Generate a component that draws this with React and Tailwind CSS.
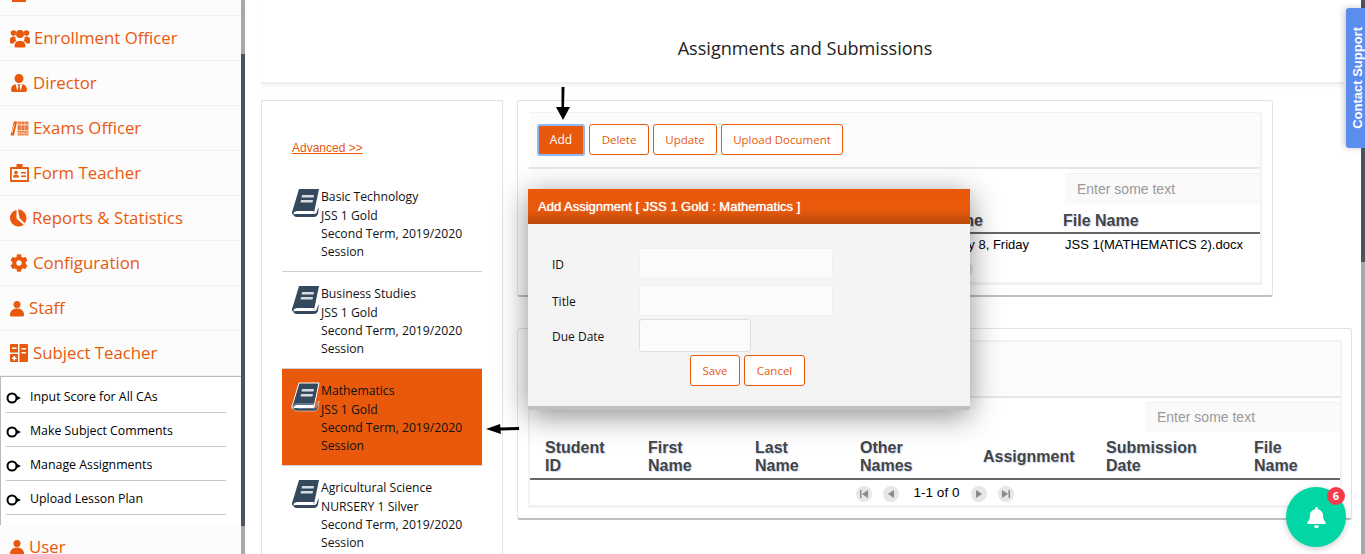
import React from 'react';
import { FaUserTie, FaCog, FaBell } from 'react-icons/fa';

const UserIcon = ({ className }) => (
  <svg className={className} viewBox="0 0 16 18" fill="currentColor">
    <circle cx="8" cy="4.5" r="4" />
    <path d="M1 18c-1 0-1-1-1-2 0-4 3-7 8-7s8 3 8 7c0 1 0 2-1 2z" />
  </svg>
);

const UsersIcon = ({ className }) => (
  <svg className={className} viewBox="0 0 20 19" fill="currentColor">
    <circle cx="3.500" cy="4" r="2.800" />
    <circle cx="16.500" cy="4" r="2.800" />
    <circle cx="10" cy="5" r="4" />
    <path d="M0 10.500C0 8.500 1.500 7.500 3.500 7.500c.8 0 1.500.2 2 .5-.3 1.500 0 3 1 4-1.500.5-2.500 1.500-3 2.500H1c-.7 0-1-.5-1-1z" />
    <path d="M20 10.500c0-2-1.500-3-3.500-3-.8 0-1.500.2-2 .5.300 1.500 0 3-1 4 1.500.5 2.500 1.500 3 2.500H19c.7 0 1-.5 1-1z" />
    <path d="M4.500 17c0-3 2-5 4-5h3c2 0 4 2 4 5 0 1-.5 1.500-1.500 1.500H6c-1 0-1.500-.5-1.500-1.500z" />
  </svg>
);

const BooksIcon = ({ className }) => (
  <svg className={className} viewBox="0 0 19 16" fill="currentColor">
    <path d="M3.500 0.500H7L3.500 15.500H0z" />
    <path d="M7.500 0.500H11v15H7.500zM11.500 0.500H15v15h-3.500zM15.500 0.500H19v15h-3.500z" opacity=".8" />
    <path d="M7.500 3.500H19v1H7.500zM7.500 9.500H19v1H7.500zM8.500 12h1.500v2H8.500zM12.500 12H14v2h-1.500zM16.500 12H18v2h-1.500zM3.500 3.500l1 .3-2.500 9-1-.3z" fill="#fff" opacity=".75" />
  </svg>
);

const BadgeIcon = ({ className }) => (
  <svg className={className} viewBox="0 0 19 18" fill="currentColor">
    <path fillRule="evenodd" d="M6.500 0h6v3H18a1 1 0 011 1v13a1 1 0 01-1 1H1a1 1 0 01-1-1V4a1 1 0 011-1h5.500zM1.800 5v11h15.400V5z" />
    <circle cx="6" cy="8.500" r="1.800" />
    <path d="M3 13.500c0-2 1.300-3 3-3s3 1 3 3zM11 8h5v1.500h-5zM11 11.500h5V13h-5z" />
  </svg>
);

const PieIcon = ({ className }) => (
  <svg className={className} viewBox="0 0 17 18" fill="currentColor">
    <path d="M8 .500a8.500 8.500 0 018.500 8.500c0 2-.7 3.800-1.800 5.200L9.500 9z" />
    <path d="M6.500 1C2.800 1.800 0 5 0 9c0 4.700 3.800 8.500 8.500 8.500 1.900 0 3.700-.6 5.100-1.800L7.500 10.500l-1-1z" />
  </svg>
);

const CalcIcon = ({ className }) => (
  <svg className={className} viewBox="0 0 18 18" fill="currentColor">
    <path d="M0 1a1 1 0 011-1h7v8.500H0zM9.500 0H17a1 1 0 011 1v16a1 1 0 01-1 1H9.500z" />
    <path d="M0 10h8v8H1a1 1 0 01-1-1z" />
    <path d="M2 3.500h4.500V5H2zM11.500 4H16v1.500h-4.500zM11.500 8H16v1.500h-4.500zM3.500 12H5v1.500h1.500V15H5v1.500H3.500V15H2v-1.500h1.500z" fill="#fff" />
  </svg>
);

const BookIcon = ({ outlined }) => (
  <svg className="w-[29px] h-[30px] shrink-0" viewBox="0 0 29 30" fill="none">
    <path
      d="M8 1h20l-5 24H5c-3 0-4 2-4 1C1 24 1 24 2 21z"
      fill="#34495e"
      stroke={outlined ? '#fff' : 'none'}
    />
    <path d="M2 25c0-2 2-3 4-3h17l-1 2H7c-2 0-2 2 0 2h16c2 0 3-1 3-3l2-4-1 7c-1 2-2 3-4 3H6c-3 0-4-2-4-4z" fill="#34495e" stroke={outlined ? '#fff' : 'none'} strokeWidth=".5" />
    <path d="M2.500 25.500c0-1.500 2-2.500 4-2.500h16.500l-.5 3H6c-1.500 0-3 .5-3.500-.500z" fill="#fff" />
    <path d="M11 7h12l-.5 2.500h-12zM10 12h12l-.5 2.500h-12z" fill="#d5dbe1" />
  </svg>
);

const SubIcon = () => (
  <svg className="w-[16px] h-[12px] shrink-0" viewBox="0 0 16 12" fill="none">
    <circle cx="6" cy="6" r="4.500" stroke="#000" strokeWidth="2" />
    <path d="M10 3.500l5 2.500-5 2.500z" fill="#000" />
  </svg>
);

const PageBtn = ({ d }) => (
  <span className="block w-[16px] h-[16px] rounded-full bg-[#e6e6e6] flex items-center justify-center">
    <svg className="w-[10px] h-[10px]" viewBox="0 0 10 10" fill="#8a8a8a">
      <path d={d} />
    </svg>
  </span>
);

const Pager = () => (
  <div className="flex items-center justify-center h-[27px] font-['Liberation_Sans',sans-serif] text-[13.5px] text-black">
    <PageBtn d="M1 1h1.500v8H1zM9 1v8L3 5z" />
    <span className="ml-[11px]"><PageBtn d="M8 1v8L2 5z" /></span>
    <span className="ml-[15px] mr-[12px]">1-1 of 0</span>
    <PageBtn d="M2 1v8l6-4z" />
    <span className="ml-[11px]"><PageBtn d="M1 1v8l6-4zM7.500 1H9v8H7.500z" /></span>
  </div>
);

const menu = [
  { label: 'Enrollment Officer', icon: <UsersIcon className="w-[20px] h-[19px]" />, gap: 'ml-[4px]' },
  { label: 'Director', icon: <FaUserTie className="w-[16px] h-[18px] mx-[1px]" />, gap: 'ml-[5px]' },
  { label: 'Exams Officer', icon: <BooksIcon className="w-[19px] h-[15px]" />, gap: 'ml-[4px]' },
  { label: 'Form Teacher', icon: <BadgeIcon className="w-[19px] h-[18px]" />, gap: 'ml-[4px]' },
  { label: 'Reports & Statistics', icon: <PieIcon className="w-[17px] h-[18px]" />, gap: 'ml-[5px]' },
  { label: 'Configuration', icon: <FaCog className="w-[18px] h-[18px]" />, gap: 'ml-[5px]' },
  { label: 'Staff', icon: <UserIcon className="w-[14px] h-[17px]" />, gap: 'ml-[5px]' },
  { label: 'Subject Teacher', icon: <CalcIcon className="w-[18px] h-[18px]" />, gap: 'ml-[5px]' },
];

const subMenu = ['Input Score for All CAs', 'Make Subject Comments', 'Manage Assignments', 'Upload Lesson Plan'];

const subjects = [
  { name: 'Basic Technology', cls: 'JSS 1 Gold' },
  { name: 'Business Studies', cls: 'JSS 1 Gold' },
  { name: 'Mathematics', cls: 'JSS 1 Gold', active: true },
  { name: 'Agricultural Science', cls: 'NURSERY 1 Silver' },
];

const Th = ({ children, className }) => (
  <div className={`font-bold text-[#444] text-[16px] leading-[18px] [text-shadow:1px_1px_1px_#c9d8f5] ${className}`}>
    {children}
  </div>
);

const Btn = ({ children, className }) => (
  <button className={`h-[31px] border border-[#e8590c] rounded-[3px] text-[#e8590c] text-[11.5px] bg-white ${className}`}>
    {children}
  </button>
);

export default function App() {
  return (
    <div className="relative flex h-[554px] w-[1365px] overflow-hidden bg-white font-['Open_Sans',sans-serif]">
      {/* side menu */}
      <aside className="w-[241px] shrink-0 h-full overflow-hidden bg-[#fcfcfc]">
        <div className="h-[16px] border-b border-[#f0f0f0] overflow-hidden">
          <div className="w-[14px] h-[2px] ml-[12px] bg-[#e8590c]" />
        </div>
        {menu.map((m) => (
          <div key={m.label} className="h-[45px] border-b border-[#f0f0f0] flex items-center pl-[10px] text-[#e8590c]">
            {m.icon}
            <span className={`${m.gap} text-[16.8px] leading-none`}>{m.label}</span>
          </div>
        ))}
        <div className="h-[149px] bg-white border-t border-l border-[#bbb] pl-[5px] pt-[2px]">
          {subMenu.map((s) => (
            <div key={s} className="w-[220px] h-[34px] pt-[4px] border-b border-[#c2c7cc] flex items-center text-black text-[12.35px]">
              <SubIcon />
              <span className="ml-[8px]">{s}</span>
            </div>
          ))}
        </div>
        <div className="h-[45px] flex items-center pl-[10px] text-[#e8590c]">
          <UserIcon className="w-[14px] h-[17px]" />
          <span className="ml-[5px] text-[16.8px] leading-none">User</span>
        </div>
      </aside>
      <div className="w-[4px] shrink-0 h-full flex flex-col">
        <div className="h-[54px] bg-[#a8a8a8]" />
        <div className="h-[472px] bg-[#4b545c]" />
        <div className="flex-1 bg-[#a8a8a8]" />
      </div>

      {/* main */}
      <main className="w-[1116px] shrink-0 h-full pl-[16px] overflow-hidden">
        <div className="w-[1084px] h-[84px] border-b-2 border-[#eeeeee] flex items-center justify-center pt-[15px] pl-[4px] shadow-[0_4px_4px_-2px_rgba(0,0,0,0.06)]">
          <h1 className="text-[18.1px] text-[#222]">Assignments and Submissions</h1>
        </div>
        <div className="flex mt-[16px] items-start">
          {/* subject list */}
          <div className="w-[242px] h-[500px] shrink-0 border border-[#e3e3e3] px-[20px]">
            <a className="block mt-[40px] ml-[10px] text-[12px] text-[#e8590c] underline font-['Liberation_Sans',sans-serif] leading-[14px]">
              Advanced &gt;&gt;
            </a>
            <div className="mt-[20px]">
              {subjects.map((s) => (
                <div
                  key={s.name}
                  className={`h-[97px] pl-[9px] pt-[12px] flex border-b border-[#cfcfcf] ${s.active ? 'bg-[#e8590c]' : ''}`}
                >
                  <div className="mt-[1px] mr-[1px]"><BookIcon outlined={s.active} /></div>
                  <div className="text-[12.2px] text-[#111] leading-[19px]">
                    <div>{s.name}</div>
                    <div>{s.cls}</div>
                    <div className="leading-[18px]">Second Term, 2019/2020</div>
                    <div className="leading-[17px]">Session</div>
                  </div>
                </div>
              ))}
            </div>
          </div>

          {/* right panels */}
          <div className="ml-[14px] flex flex-col gap-[31px]">
            <section className="w-[756px] h-[197px] border border-[#e3e3e3] border-b-2 border-b-[#bcc0c4] rounded-[3px] pl-[11px] pt-[11px] font-['Liberation_Sans',sans-serif]">
              <div className="w-[733px] h-[173px] border-b-3 border-r-2 border-[#f2f2f2]">
                <div className="h-[57px] bg-[#fcfcfc] border-b-2 border-t border-[#e6e6e6] border-t-[#f2f2f2] flex items-center gap-[4px] pl-[8px] pb-[1px] font-['Open_Sans',sans-serif]">
                  <button className="w-[48px] h-[32px] rounded-[3px] bg-[#e8590c] text-white text-[12px] border-2 border-[#8fb8f0]">Add</button>
                  <Btn className="w-[60px]">Delete</Btn>
                  <Btn className="w-[64px]">Update</Btn>
                  <Btn className="w-[122px]">Upload Document</Btn>
                </div>
                <div className="flex justify-end mt-[4px]">
                  <div className="w-[195px] h-[31px] bg-[#fafafa] rounded-[3px] border-t border-[#f0f0f0] pl-[12px] flex items-center text-[14px] text-[#999]">
                    Enter some text
                  </div>
                </div>
                <div className="flex h-[30px] items-end pb-[2px] border-b-2 border-[#666]">
                  <Th className="w-[454px] text-right">Deadline</Th>
                  <Th className="ml-[80px]">File Name</Th>
                </div>
                <div className="flex items-center h-[22px] text-[13px] text-black whitespace-nowrap">
                  <span className="w-[500px] text-right">January 8, Friday</span>
                  <span className="ml-[36px]">JSS 1(MATHEMATICS 2).docx</span>
                </div>
                <div className="ml-[428px] mt-[5px] w-[16px] h-[16px] rounded-full bg-[#e6e6e6]" />
              </div>
            </section>

            <section className="w-[835px] h-[192px] border border-[#e3e3e3] border-b-2 border-b-[#bcc0c4] rounded-[3px] pl-[10px] pt-[11px] font-['Liberation_Sans',sans-serif]">
              <div className="w-[814px] h-[168px] border-b-3 border-x-2 border-[#f2f2f2]">
                <div className="h-[58px] bg-[#fcfcfc] border-y-2 border-t-[#f2f2f2] border-b-[#e6e6e6]" />
                <div className="flex justify-end mt-[4px]">
                  <div className="w-[195px] h-[30px] bg-[#fafafa] rounded-[3px] border-t border-[#f0f0f0] pl-[12px] flex items-center text-[14px] text-[#999]">
                    Enter some text
                  </div>
                </div>
                <div className="flex items-end h-[48px] pb-[3px] border-b-2 border-[#666] pl-[15px]">
                  <Th className="w-[103px]">Student<br />ID</Th>
                  <Th className="w-[107px]">First<br />Name</Th>
                  <Th className="w-[105px]">Last<br />Name</Th>
                  <Th className="w-[123px]">Other<br />Names</Th>
                  <Th className="w-[123px] pb-[9px]">Assignment</Th>
                  <Th className="w-[148px]">Submission<br />Date</Th>
                  <Th>File<br />Name</Th>
                </div>
                <Pager />
              </div>
            </section>
          </div>
        </div>
      </main>

      {/* right page scrollbar */}
      <div className="w-[4px] shrink-0 h-full flex flex-col">
        <div className="h-[262px] bg-[#4b545c]" />
        <div className="flex-1 bg-[#a8a8a8]" />
      </div>

      {/* dialog */}
      <div className="absolute left-[528px] top-[189px] w-[442px] h-[221px] bg-[#f4f4f4] border-b-4 border-[#bcc0c4] rounded-b-[3px] shadow-[0_6px_30px_rgba(0,0,0,0.45)]">
        <div className="h-[35px] bg-gradient-to-b from-[#e8590c] from-60% to-[#b84a0a] flex items-center pl-[10px] text-white text-[13px] [text-shadow:0_0_1px_#fff] font-['Liberation_Sans',sans-serif]">
          Add Assignment [ JSS 1 Gold : Mathematics ]
        </div>
        <div className="pl-[24px] pt-[24px] text-[12px] text-[#111]">
          <div className="flex items-center h-[31px]">
            <span className="w-[87px] pt-[2px]">ID</span>
            <div className="w-[194px] h-[31px] bg-[#fbfbfb] border border-[#f0f0f0] rounded-[3px]" />
          </div>
          <div className="flex items-center h-[31px] mt-[6px]">
            <span className="w-[87px] pt-[2px]">Title</span>
            <div className="w-[194px] h-[31px] bg-[#fbfbfb] border border-[#f0f0f0] rounded-[3px]" />
          </div>
          <div className="flex items-center h-[33px] mt-[3px]">
            <span className="w-[87px] pt-[2px]">Due Date</span>
            <div className="w-[112px] h-[33px] bg-[#fbfbfb] border border-[#dedede] rounded-[3px]" />
          </div>
          <div className="flex gap-[4px] mt-[3px] ml-[138px]">
            <Btn className="w-[50px]">Save</Btn>
            <Btn className="w-[61px]">Cancel</Btn>
          </div>
        </div>
      </div>

      {/* annotation arrows */}
      <svg className="absolute left-[555px] top-[87px] w-[16px] h-[34px]" viewBox="0 0 16 34" fill="#000">
        <path d="M6.500 0h3l-.5 20h6L8 33 1 20h5.500z" />
      </svg>
      <svg className="absolute left-[486px] top-[422px] w-[34px] h-[14px]" viewBox="0 0 34 14" fill="#000">
        <path d="M0 7l14-5 .5 3.500 18.500-.5v3l-18.500.5.5 3.500z" />
      </svg>

      {/* contact support tab */}
      <div className="absolute right-0 top-[8px] w-[19px] h-[140px] bg-[#5b8def] rounded-l-[3px] flex items-center justify-center pl-[5px] shadow-[-2px_0_6px_rgba(0,0,0,0.2)]">
        <span className="[writing-mode:vertical-rl] rotate-180 text-white text-[13px] font-bold font-['Liberation_Sans',sans-serif] whitespace-nowrap">
          Contact Support
        </span>
      </div>

      {/* notification bubble */}
      <div className="absolute left-[1286px] top-[487px] w-[60px] h-[60px] rounded-full bg-[#03d6a5] flex items-center justify-center shadow-[0_2px_6px_rgba(0,0,0,0.2)]">
        <FaBell className="w-[19px] h-[21px] text-white" />
        <span className="absolute right-[1px] top-0 w-[18px] h-[18px] rounded-full bg-[#f93a4a] text-white text-[11px] font-bold flex items-center justify-center">
          6
        </span>
      </div>
    </div>
  );
}
